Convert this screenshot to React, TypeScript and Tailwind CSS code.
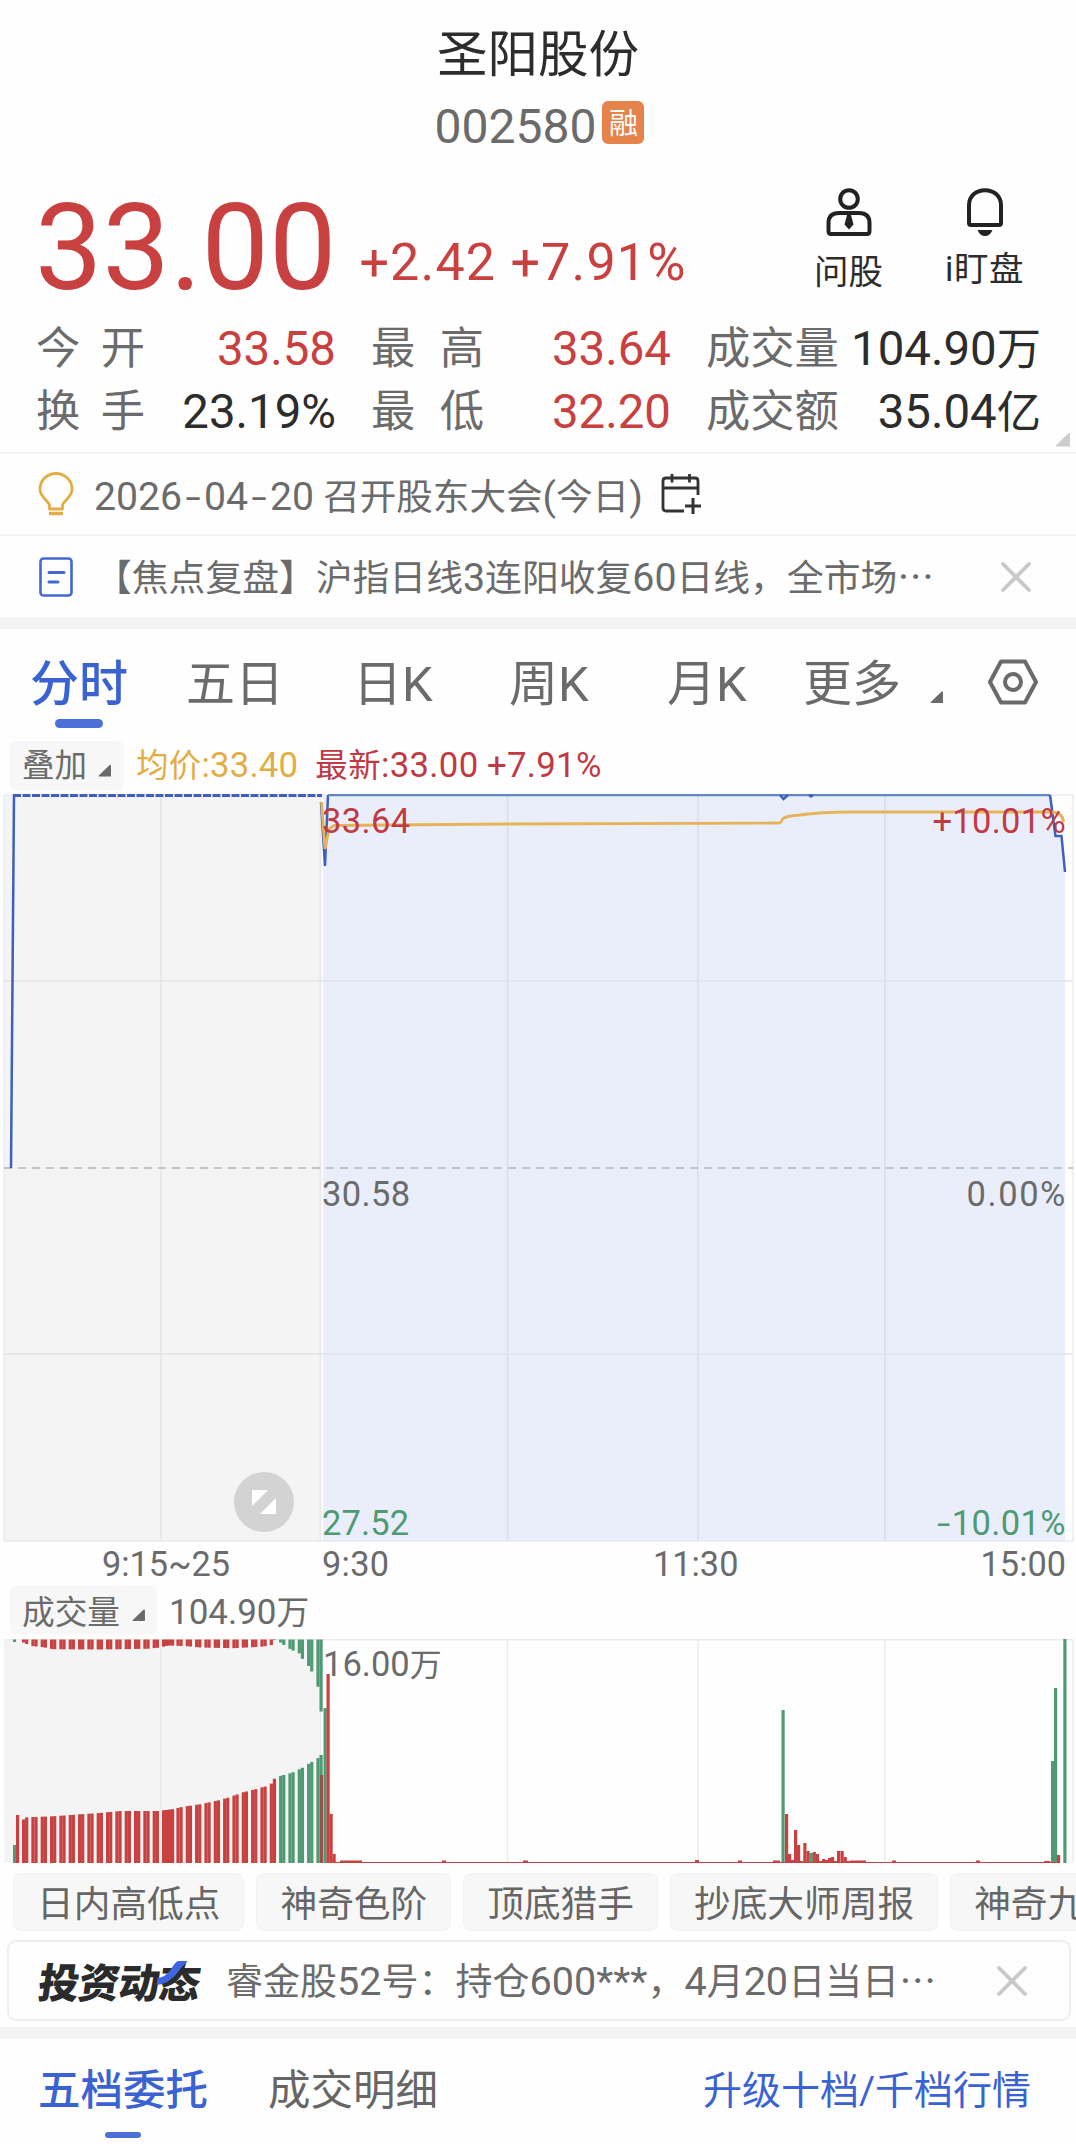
import { Fragment } from "react";
import type { ReactNode } from "react";

const RED = "#c8403f";
const GREEN = "#4f9a72";

const stats = [
  [
    { label: "今开", value: "33.58", up: true },
    { label: "最高", value: "33.64", up: true },
    { label: "成交量", value: "104.90万", up: false },
  ],
  [
    { label: "换手", value: "23.19%", up: false },
    { label: "最低", value: "32.20", up: true },
    { label: "成交额", value: "35.04亿", up: false },
  ],
];

const indicators = ["日内高低点", "神奇色阶", "顶底猎手", "抄底大师周报", "神奇九"];

type Point = [number, number];

// pre-market order curves, [x, y] in volume chart units
const preBottom: Point[] = [
  [17, 189], [25, 178.5], [33, 178], [53, 177.3], [80, 175.3], [100, 174], [120, 172], [157, 172],
  [172, 170.3], [183, 167.7], [200, 165.3], [217, 161.7], [227, 159], [243, 153.3], [255, 150.3],
  [267, 147], [271, 145], [275, 138.7], [280, 137], [292, 133.7], [302, 129], [311, 123.3], [317, 120], [321, 116],
];
const preTop: Point[] = [
  [17, 1], [22, 2], [25, 4], [33, 6.7], [43, 7.7], [53, 9.7], [100, 10], [147, 9.3], [160, 8], [168, 6],
  [187, 6.7], [200, 8], [233, 8.7], [260, 7.3], [271, 6], [274, 0.5], [278, 1], [280, 2.5], [283, 5],
  [292, 10.7], [299, 13.5], [302, 19], [308, 25.5], [311, 30.7], [317.5, 43.5], [320.5, 72],
];

const at = (points: Point[], x: number) => {
  const i = points.findIndex((p) => p[0] >= x);
  if (i === -1) return points[points.length - 1][1];
  if (i === 0) return points[0][1];
  const [x0, y0] = points[i - 1];
  const [x1, y1] = points[i];
  return y0 + ((y1 - y0) * (x - x0)) / (x1 - x0);
};

// pairs of thin bars with a gap, and one solid run in the middle
const pairs = (start: number, count: number) =>
  Array.from({ length: count }, (_, k) => [start + k * 9.333, start + k * 9.333 + 3.1]).flat();
const preBars = [...pairs(22, 15), 162, 165, 168, 171, ...pairs(176.4, 16)];

// [x, height, color]
const volumeBars: [number, number, string][] = [
  [13, 18, GREEN],
  [16, 48, RED],
  [320, 88, "#9a5048"],
  [323.5, 155, GREEN],
  [326.5, 189, RED],
  [329.5, 49, RED],
  [332.5, 9, RED],
  [781.5, 153, GREEN],
  [785, 49, RED],
  [788, 9, RED],
  [791, 3, RED],
  [794, 33, RED],
  [797, 18, RED],
  [800, 2, RED],
  [803.3, 20, RED],
  [806.5, 12, RED],
  [809.6, 10, GREEN],
  [812.7, 11, RED],
  [815.8, 9, RED],
  [819, 2, RED],
  [822, 4, RED],
  [825, 3, RED],
  [828, 5, RED],
  [831, 6, RED],
  [834, 2, RED],
  [837, 12, RED],
  [840.5, 12, RED],
  [843.6, 6, RED],
  [846.7, 2, RED],
  [1044, 2, RED],
  [1047, 2, RED],
  [1051, 102, GREEN],
  [1054, 175, GREEN],
  [1057, 8, RED],
  [1063.3, 224, GREEN],
];

// Latin runs sit slightly larger than the Chinese glyphs, the ellipsis is vertically centred
const Mixed = ({ children }: { children: string }) => (
  <>
    {children.split(/([\x21-\x2c\x2e-\x7e]+|-|…)/).map((part, i) => {
      if (part === "…")
        return (
          <span key={i} className="font-['Noto_Sans_CJK_SC']">
            …
          </span>
        );
      if (part === "-")
        return (
          <span key={i} className="inline-block w-[22px] scale-x-150 text-center">
            -
          </span>
        );
      return i % 2 ? (
        <span key={i} className="text-[1.07em]">
          {part}
        </span>
      ) : (
        <Fragment key={i}>{part}</Fragment>
      );
    })}
  </>
);

const Corner = ({ className }: { className: string }) => (
  <svg viewBox="0 0 14 13" className={className} fill="currentColor">
    <path d="M12.6 0.6Q14 0 14 1.6V13H1.4Q0 13 0.8 12Z" />
  </svg>
);

const Close = () => (
  <svg viewBox="0 0 30 30" className="h-[30px] w-[30px] text-[#c9c9c9]" fill="none" stroke="currentColor" strokeWidth="3.8" strokeLinecap="round">
    <path d="M2 2L28 28M28 2L2 28" />
  </svg>
);

const Band = () => <div className="h-3 bg-[#f3f3f3]" />;

const ChartLabel = ({ className, children }: { className: string; children: ReactNode }) => (
  <span className={`absolute text-[34.5px] leading-[36px] ${className}`}>{children}</span>
);

const Header = () => (
  <header>
    <div className="h-[101px] pt-[29px] text-center text-[50.5px] leading-[52px] text-[#2c2c2c]">圣阳股份</div>
    <div className="flex h-[43px] justify-center gap-[6px] pl-[3px]">
      <span className="pt-[1px] text-[48px] leading-[50px] text-[#6b6b6b]">002580</span>
      <span className="flex h-[43px] w-[42px] items-center justify-center rounded-[6px] bg-[#e6834b] pt-[4px] text-[29px] leading-none text-white">
        融
      </span>
    </div>
  </header>
);

const Quote = () => (
  <section className="h-[310px] border-b-2 border-[#f3f3f3]">
    <div className="flex h-[172px] justify-between pl-[35px] pr-[52px]">
      <div className="flex items-baseline pt-[34px] text-[#c8403f]">
        <span className="text-[120px] leading-[140px]">33.00</span>
        <span className="relative -top-[9px] ml-[23px] text-[52px] tracking-[1.2px]">+2.42 +7.91%</span>
      </div>
      <div className="flex gap-[62px] pt-[44px] text-[34.5px] leading-[40px] text-[#2c2c2c]">
        <div className="flex flex-col items-center">
          <svg viewBox="0 0 46 48" className="h-[48px] w-[46px]" fill="none" stroke="#222" strokeWidth="4">
            <circle cx="23" cy="11" r="8.8" />
            <path d="M2.5 43V35Q2.5 25 13 25H33Q43.5 25 43.5 35V43Q43.5 46 41 46H5Q2.5 46 2.5 43Z" />
            <path d="M21 27h4l2.5 9.5L23 41.5l-4.5-5z" fill="#222" stroke="none" />
          </svg>
          <span className="mt-[16px]">问股</span>
        </div>
        <div className="flex flex-col items-center">
          <svg viewBox="0 0 36 48" className="h-[48px] w-[36px]" fill="none" stroke="#222" strokeWidth="4">
            <path d="M2 35V17C2 8 9 2.2 18 2.2S34 8 34 17V35Q34 37 32 37H4Q2 37 2 35Z" />
            <path d="M10.5 42H25.5Q23 48 18 48T10.5 42Z" fill="#222" stroke="none" />
          </svg>
          <span className="mt-[13px] tracking-[0.5px]">i盯盘</span>
        </div>
      </div>
    </div>
    <div className="relative flex flex-col pt-[2px]">
      {stats.map((row, i) => (
        <div key={i} className="flex h-[63px] items-center pl-[36px] pr-[35px] text-[44.3px] leading-[62px]">
          {row.map((cell, j) => (
            <div key={cell.label} className={j === 2 ? "flex w-[335px] justify-between" : "mr-[35px] flex w-[300px] justify-between"}>
              <span className={j === 2 ? "text-[#6b6b6b]" : j === 1 ? "flex w-[113px] justify-between text-[#6b6b6b]" : "flex w-[109px] justify-between text-[#6b6b6b]"}>
                {j === 2 ? cell.label : cell.label.split("").map((c) => <span key={c}>{c}</span>)}
              </span>
              <span className={cell.up ? "text-[#c8403f]" : "text-[#2c2c2c]"}>
                <Mixed>{cell.value}</Mixed>
              </span>
            </div>
          ))}
        </div>
      ))}
      <Corner className="absolute -bottom-[3px] right-[6px] h-[15px] w-[15px] text-[#cccccc]" />
    </div>
  </section>
);

const Notices = () => (
  <section className="text-[36.6px] text-[#6b6b6b]">
    <div className="flex h-[82px] items-center border-b-2 border-[#f5f5f5] pl-[38px]">
      <svg viewBox="0 0 36 44" className="h-[44px] w-[36px]" fill="none" stroke="#e3ad45" strokeWidth="2.8" strokeLinejoin="round">
        <path d="M11.5 37V33.5C11.5 29 2 26 2 17A16 15.5 0 0 1 34 17C34 26 24.5 29 24.5 33.5V37Z" />
        <path d="M11 41.5H25" strokeWidth="3.5" />
      </svg>
      <span className="ml-[20px] whitespace-pre pt-[6px]">
        <Mixed>2026-04-20 召开股东大会(今日)</Mixed>
      </span>
      <svg viewBox="0 0 42 42" className="ml-[18px] h-[42px] w-[42px]" fill="none" stroke="#333" strokeWidth="2.8">
        <path d="M23 38H5Q2 38 2 35V8Q2 5 5 5H34Q37 5 37 8V22M2 15H37M11 1V9.5M28.5 1V9.5" />
        <path d="M24 33H40M32 25V41" strokeWidth="3" />
      </svg>
    </div>
    <div className="flex h-[81px] items-center pl-[39px] pr-[45px]">
      <svg viewBox="0 0 34 40" className="h-[40px] w-[34px]" fill="none" stroke="#4368cf" strokeWidth="2.6">
        <rect x="1.5" y="1.5" width="31" height="37" rx="3" />
        <path d="M10 15.5H25M10 25H19" strokeWidth="3" strokeLinecap="round" />
      </svg>
      <span className="ml-[22px] flex-1 whitespace-nowrap pt-[3px] text-[36.8px]">
        <Mixed>【焦点复盘】沪指日线3连阳收复60日线，全市场…</Mixed>
      </span>
      <Close />
    </div>
  </section>
);

const PeriodTabs = () => (
  <nav className="flex h-[108px] pl-[30px] pt-[25px] text-[49px] leading-[62px] text-[#6b6b6b]">
    <div className="flex w-[156px] flex-col">
      <span className="font-medium text-[#3b62d3]">分时</span>
      <span className="ml-[25px] mt-[3px] h-[9px] w-[48px] rounded-full bg-[#4c70d8]" />
    </div>
    <span className="w-[167px]">五日</span>
    <span className="w-[156px]">日K</span>
    <span className="w-[158px]">周K</span>
    <span className="w-[136px]">月K</span>
    <span>更多</span>
    <Corner className="ml-[29px] mt-[37px] h-[12px] w-[13px]" />
    <svg viewBox="0 0 50 46" className="ml-[45px] mt-[5px] h-[46px] w-[50px]" fill="none" stroke="currentColor" strokeWidth="4">
      <path d="M13 2.5H37L48 23L37 43.5H13L2 23Z" strokeLinejoin="round" />
      <circle cx="25" cy="23" r="8" />
    </svg>
  </nav>
);

const PriceChart = () => (
  <section>
    <div className="flex h-[57px] items-center pl-[10px] text-[32.5px]">
      <div className="flex h-[49px] w-[114px] items-center rounded-[6px] bg-[#f7f7f7] pl-[12px] text-[#6b6b6b]">
        <span className="pt-[2px]">叠加</span>
        <Corner className="ml-[11px] mt-[9px] h-[13px] w-[13px]" />
      </div>
      <span className="ml-[12px] tracking-[0.2px] text-[#e3ad45]">
        <Mixed>均价:33.40</Mixed>
      </span>
      <span className="ml-[17px] tracking-[0.3px] text-[#c03a44]">
        <Mixed>最新:33.00 +7.91%</Mixed>
      </span>
    </div>
    <div className="relative h-[748px]">
      <svg viewBox="0 0 1076 748" className="block h-[748px] w-full" fill="none">
        <rect x="4" y="0" width="317" height="748" fill="#f4f4f4" />
        <path d="M323 1H1050L1055 40L1059 43L1062 44L1065 77V748H323Z" fill="#eaeefb" />
        <path d="M161 0V748M320.5 0V748" stroke="#e9e9e9" strokeWidth="2" />
        <path d="M507.5 0V748M698 0V748M885 0V748" stroke="#dde1ee" strokeWidth="2" />
        <path d="M4 187H1073M4 560H1073" stroke="#e2e4ea" strokeWidth="1.5" />
        <path d="M4 1H1073V747H4Z" stroke="#ededf0" strokeWidth="1.5" />
        <path d="M4 374H1073" stroke="#b5b5b8" strokeWidth="1.5" strokeDasharray="8 6" />
        <path d="M11 374L14 1" stroke="#3d60c0" strokeWidth="2.5" />
        <path d="M13 1.5H322" stroke="#3d60c0" strokeWidth="3" strokeDasharray="8 1.5" />
        <path d="M321 8L325 72L328 1" stroke="#3d60c0" strokeWidth="2.5" />
        <path d="M328 1H1050" stroke="#6484c4" strokeWidth="2.5" />
        <path d="M780 1L783.5 5L788 1M809 1L811 2.5L813 1M1050 1L1055.5 42H1061.5L1065 78" stroke="#3d60c0" strokeWidth="2.5" />
        <path d="M321.5 8L325 55L329 35L334 31.5L507 30L779 29Q781 29 783 24.5Q786 22 800 21Q820 18 850 18H1050Q1063 18 1063.5 28" stroke="#e6b458" strokeWidth="2.8" />
      </svg>
      <ChartLabel className="left-[322px] top-[9px] tracking-[0.4px] text-[#c03a44]">33.64</ChartLabel>
      <ChartLabel className="right-[10px] top-[9px] tracking-[0.3px] text-[#c03a44]">+10.01%</ChartLabel>
      <ChartLabel className="left-[322px] top-[382px] tracking-[0.4px] text-[#6b6b6b]">30.58</ChartLabel>
      <ChartLabel className="right-[9px] top-[382px] tracking-[1.6px] text-[#6b6b6b]">0.00%</ChartLabel>
      <ChartLabel className="left-[322px] top-[711px] tracking-[0.1px] text-[#4f9a72]">27.52</ChartLabel>
      <ChartLabel className="right-[10px] top-[711px] tracking-[0.4px] text-[#4f9a72]">
        <span className="mr-[3px] inline-block scale-x-140">-</span>10.01%
      </ChartLabel>
      <div className="absolute left-[234px] top-[678px] flex h-[60px] w-[60px] items-center justify-center rounded-full bg-[#d3d3d3]">
        <svg viewBox="0 0 24 24" className="h-6 w-6" fill="#fff">
          <path d="M0 0H16L0 16ZM24 8V24H8Z" />
        </svg>
      </div>
    </div>
    <div className="flex h-[44px] items-center pl-[102px] pr-[10px] pt-[1px] text-[34.3px] text-[#6b6b6b]">
      <span className="w-[220px]">9:15~25</span>
      <span className="w-[331px] tracking-[0.3px]">9:30</span>
      <span className="flex-1">11:30</span>
      <span>15:00</span>
    </div>
  </section>
);

const VolumeChart = () => (
  <section>
    <div className="flex h-[53px] items-start pl-[10px] text-[32.7px] leading-[48px] text-[#6b6b6b]">
      <div className="flex h-[48px] w-[147px] items-center rounded-[6px] bg-[#f7f7f7] pl-[12px]">
        <span className="pt-[5px]">成交量</span>
        <Corner className="ml-[12px] mt-[9px] h-[12px] w-[13px]" />
      </div>
      <span className="ml-[12px] pt-[3px]">
        <Mixed>104.90万</Mixed>
      </span>
    </div>
    <div className="relative h-[224px]">
      <svg viewBox="0 0 1076 224" className="block h-[224px] w-full" fill="none">
        <rect x="4" y="0" width="317" height="224" fill="#f4f4f4" />
        <path d="M161 0V224M320.5 0V224" stroke="#e9e9e9" strokeWidth="1.5" />
        <path d="M4 0.75H1073V224M507.5 0V224M698 0V224M885 0V224" stroke="#ececec" strokeWidth="1.5" />
        {preBars.map((x) => {
          const y = at(preBottom, x + 1.5);
          return (
            <g key={x} fill={x > 276 ? GREEN : RED}>
              <rect x={x} y="0.5" width="3.2" height={at(preTop, x + 1.5)} />
              <rect x={x} y={y} width="3.2" height={224 - y} />
            </g>
          );
        })}
        {volumeBars.map(([x, h, color]) => (
          <rect key={x} x={x} y={224 - h} width="3.2" height={h} fill={color} />
        ))}
        <rect x="13" y="0.5" width="3" height="2.5" fill={GREEN} />
        <path d="M335 223.5H1060" stroke={RED} strokeWidth="1" />
        <path d="M340 222.5H362M442 222.5H446M523 222.5H528M695 222H699M738 222.5H742M773 222.5H780M850 222.5H866M892 222.5H896M976 222.5H980" stroke={RED} strokeWidth="2" />
      </svg>
      <ChartLabel className="left-[323px] top-[7px] text-[#6b6b6b]">
        16.00<span className="text-[32px]">万</span>
      </ChartLabel>
    </div>
  </section>
);

const Indicators = () => (
  <div className="flex h-[77px] gap-3 overflow-hidden pl-[13px] pt-[10px] text-[36.7px] text-[#666]">
    {indicators.map((name) => (
      <span key={name} className="flex h-[58px] shrink-0 items-center rounded-[8px] border border-[#f2f2f2] bg-[#f7f7f7] px-[23px] pt-[5px]">
        {name}
      </span>
    ))}
  </div>
);

const Banner = () => (
  <div className="mb-[6px] ml-[7px] mr-[5px] flex h-[81px] items-center rounded-[9px] border-2 border-[#efefef] pl-[30px] pr-[42px]">
    <div className="relative w-[164px] -skew-x-8 pt-[6px] text-[41px] font-black leading-[58px] tracking-[-0.8px] text-[#2b2b2b]">
      投资动态
      <svg viewBox="0 0 30 24" className="absolute left-[118px] top-[12px] h-[24px] w-[30px]" fill="#3f66e0">
        <path d="M18 0H28Q24 4 19 12Q12 23 0 24V17Q8 16 12 9Q15 2 18 0Z" />
      </svg>
    </div>
    <span className="ml-[23px] flex-1 whitespace-nowrap pt-[3px] text-[37px] text-[#6b6b6b]">
      <Mixed>睿金股52号：持仓600***，4月20日当日…</Mixed>
    </span>
    <Close />
  </div>
);

const OrderTabs = () => (
  <div className="flex h-[106px] pl-[38px] pr-[45px] pt-[21px] text-[42.5px] leading-[62px]">
    <div className="flex flex-col items-center text-[#3b62d3]">
      <span className="font-medium">五档委托</span>
      <span className="mt-[10px] h-[6px] w-[36px] rounded-full bg-[#4c70d8]" />
    </div>
    <span className="ml-[60px] flex-1 text-[#666]">成交明细</span>
    <span className="text-[39px] text-[#3b62d3]">升级十档/千档行情</span>
  </div>
);

export default function App() {
  return (
    <main className="h-[2144px] w-[1076px] overflow-hidden bg-[#fefefe] font-[Roboto,'Noto_Sans_CJK_SC',sans-serif]">
      <Header />
      <Quote />
      <Notices />
      <Band />
      <PeriodTabs />
      <PriceChart />
      <VolumeChart />
      <Indicators />
      <Banner />
      <Band />
      <OrderTabs />
    </main>
  );
}
